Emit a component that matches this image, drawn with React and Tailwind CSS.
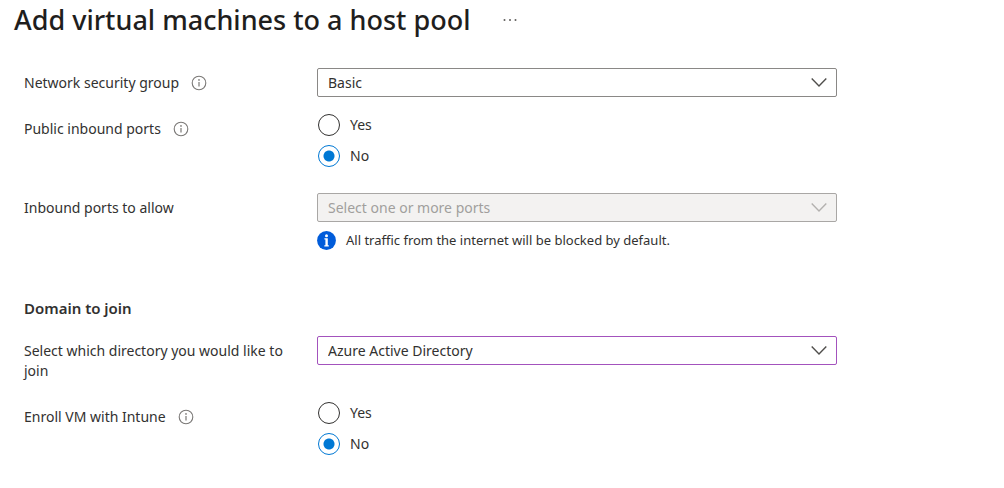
import React, { useState } from 'react';

const InfoIcon = () => (
    <svg className="h-4 w-4 shrink-0" viewBox="0 0 16 16" fill="none" aria-hidden="true">
        <circle cx="8" cy="8" r="6.8" stroke="#7a7876" strokeWidth="1.1" />
        <path d="M8 7v4.6" stroke="#7a7876" strokeWidth="1.2" />
        <circle cx="8" cy="4.9" r="0.85" fill="#7a7876" />
    </svg>
);

const Field = ({ id, label, info, className = '', children }) => (
    <div className={`grid grid-cols-[293px_minmax(0,520px)] ${className}`}>
        <div className="flex items-start gap-3 pt-[5px] pr-5">
            <label id={`${id}-label`} htmlFor={id}>{label}</label>
            {info && (
                <button type="button" aria-label={`About ${label}`} className="flex h-5 items-center">
                    <InfoIcon />
                </button>
            )}
        </div>
        <div>{children}</div>
    </div>
);

const Dropdown = ({ id, options, disabled, className }) => (
    <div className="relative">
        <select
            id={id}
            disabled={disabled}
            className={`block h-[29px] w-full appearance-none rounded-xs border pr-10 pl-2.5 outline-none ${className}`}
        >
            {options.map((option) => (
                <option key={option}>{option}</option>
            ))}
        </select>
        <svg
            className={`pointer-events-none absolute top-1.5 right-2.5 h-4 w-4 ${disabled ? 'text-[#b3b1af]' : 'text-[#504e4c]'}`}
            viewBox="0 0 16 16"
            fill="none"
            aria-hidden="true"
        >
            <path d="M0.7 4.6 8 11.9l7.3-7.3" stroke="currentColor" strokeWidth="1.4" />
        </svg>
    </div>
);

const YesNo = ({ id, label }) => {
    const [value, setValue] = useState('No');

    return (
        <div id={id} role="radiogroup" aria-label={label} className="flex flex-col items-start gap-[9px]">
            {['Yes', 'No'].map((option) => (
                <label key={option} className="flex h-[22px] items-center gap-2.5 pl-px">
                    <input
                        type="radio"
                        name={id}
                        checked={value === option}
                        onChange={() => setValue(option)}
                        className="h-[22px] w-[22px] shrink-0 appearance-none rounded-full border border-[#323130] bg-white checked:border-[#0078d4] checked:bg-[radial-gradient(circle,#0078d4_5px,transparent_6px)]"
                    />
                    {option}
                </label>
            ))}
        </div>
    );
};

export default function App() {
    return (
        <div className="min-h-screen bg-white font-['Segoe_UI','Noto_Sans',sans-serif] text-sm leading-5 text-[#323130]">
            <header className="flex h-10 items-center gap-8 pl-3.5">
                <h1 className="text-[27px] leading-10 font-medium text-[#1f1e1d]">Add virtual machines to a host pool</h1>
                <button type="button" aria-label="More actions">
                    <svg className="h-4 w-4" viewBox="0 0 16 16" fill="#605e5c" aria-hidden="true">
                        <circle cx="2.5" cy="8" r="1" />
                        <circle cx="8" cy="8" r="1" />
                        <circle cx="13.5" cy="8" r="1" />
                    </svg>
                </button>
            </header>

            <main className="pt-7 pr-6 pb-8 pl-6">
                <Field id="nsg" label="Network security group" info>
                    <Dropdown id="nsg" options={['Basic', 'None', 'Advanced']} className="border-[#8a8886] bg-white" />
                </Field>

                <Field id="public-ports" label="Public inbound ports" info className="mt-[17px]">
                    <YesNo id="public-ports" label="Public inbound ports" />
                </Field>

                <Field id="ports" label="Inbound ports to allow" className="mt-[26px]">
                    <Dropdown
                        id="ports"
                        options={['Select one or more ports']}
                        disabled
                        className="border-[#a9a7a5] bg-[#f3f2f1] text-[#a19f9d] opacity-100"
                    />
                    <p className="mt-2 flex items-center gap-2.5 text-[13px] leading-5">
                        <svg className="h-[19px] w-[19px] shrink-0" viewBox="0 0 19 19" aria-hidden="true">
                            <circle cx="9.5" cy="9.5" r="9.4" fill="#015cda" />
                            <circle cx="9.5" cy="4.7" r="1.5" fill="#fff" />
                            <path d="M7.4 7.3h3.4v6.9h1v1.3H7.3v-1.3h1.1V8.6h-1z" fill="#fff" />
                        </svg>
                        All traffic from the internet will be blocked by default.
                    </p>
                </Field>

                <h2 className="mt-12 text-[15px] leading-5 font-semibold">Domain to join</h2>

                <Field id="directory" label="Select which directory you would like to join" className="mt-[18px]">
                    <Dropdown
                        id="directory"
                        options={['Azure Active Directory', 'Active Directory']}
                        className="border-[#a352bd] bg-white"
                    />
                </Field>

                <Field id="intune" label="Enroll VM with Intune" info className="mt-[21px]">
                    <YesNo id="intune" label="Enroll VM with Intune" />
                </Field>
            </main>
        </div>
    );
}
